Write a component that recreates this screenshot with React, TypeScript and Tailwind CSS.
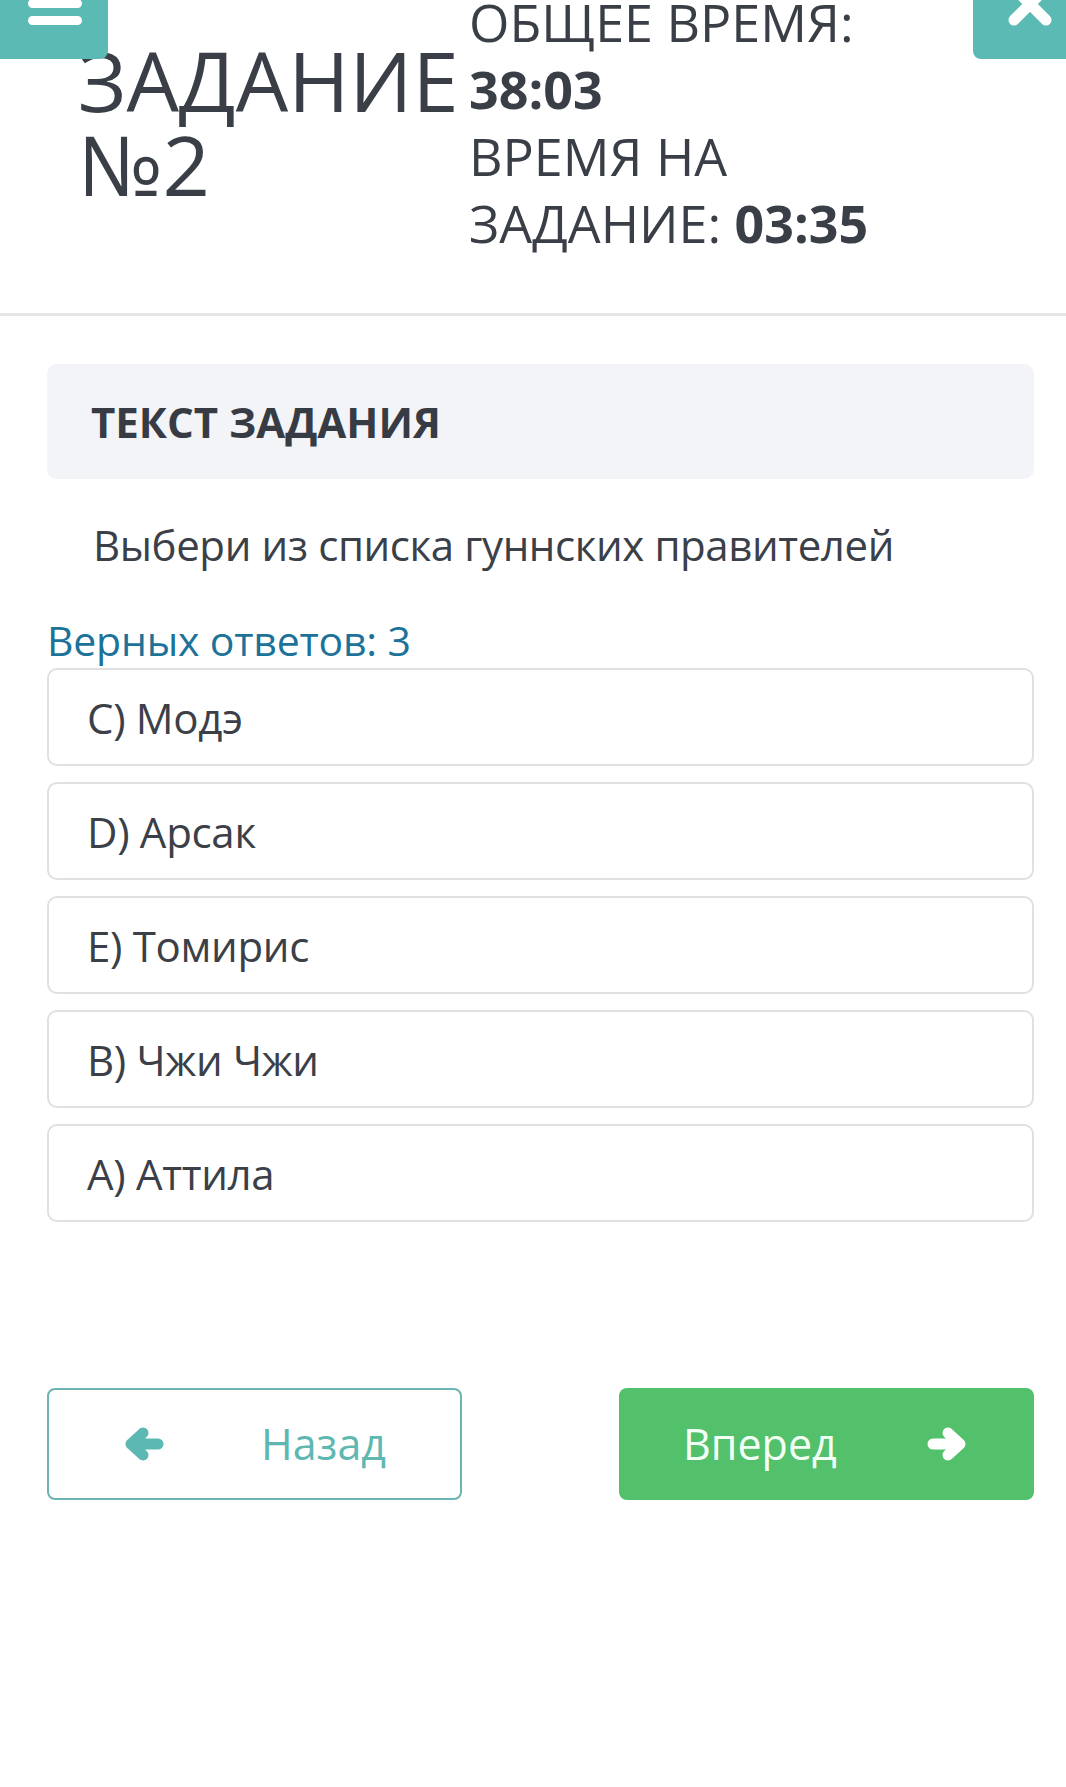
import React from "react";

const options = ["C) Модэ", "D) Арсак", "E) Томирис", "B) Чжи Чжи", "A) Аттила"];

function MenuButton() {
  return (
    <button className="absolute left-0 top-0 h-[59px] w-[108px] overflow-hidden rounded-br-[8px] bg-[#5bbab4]">
      <svg
        className="absolute left-[28px] top-[-18px]"
        width="54"
        height="43"
        viewBox="0 0 54 43"
      >
        <rect x="0" y="0" width="54" height="9" rx="4.5" fill="#fff" />
        <rect x="0" y="17" width="54" height="9" rx="4.5" fill="#fff" />
        <rect x="0" y="34" width="54" height="9" rx="4.5" fill="#fff" />
      </svg>
    </button>
  );
}

function CloseButton() {
  return (
    <button className="absolute right-0 top-0 h-[59px] w-[93px] overflow-hidden rounded-bl-[8px] bg-[#5bbab4]">
      <svg
        className="absolute left-[33px] top-[-20px]"
        width="48"
        height="48"
        viewBox="0 0 48 48"
      >
        <path
          d="M8 8 L40 40 M40 8 L8 40"
          stroke="#fff"
          strokeWidth="11"
          strokeLinecap="round"
        />
      </svg>
    </button>
  );
}

// chunky arrow like the font-awesome one in the screenshot
function Arrow({ dir, color }: { dir: "left" | "right"; color: string }) {
  return (
    <svg
      width="40"
      height="34"
      viewBox="0 0 40 34"
      className={dir === "right" ? "-scale-x-100" : ""}
    >
      <path
        d="M7 17 L34 17 M19 6 L7 17 L19 28"
        stroke={color}
        strokeWidth="11"
        strokeLinecap="round"
        strokeLinejoin="round"
        fill="none"
      />
      <path d="M7 17 L19 6 L19 28 Z" fill={color} />
    </svg>
  );
}

export default function App() {
  return (
    <div
      className="relative min-h-[1787px] overflow-hidden bg-white text-[#3b4048]"
      style={{ fontFamily: '"Open Sans", "Noto Sans", sans-serif' }}
    >
      <header className="-mt-[12px] flex items-center border-b-[3px] border-[#e6e6e6] pb-[57px] pl-[78px]">
        <h1 className="w-[391px] shrink-0 text-[83px] font-normal leading-[84px] text-[#3a3f47]">
          ЗАДАНИЕ
          <br />
          №2
        </h1>
        <div className="text-[52px] leading-[67px] text-[#3a3f47]">
          <div>ОБЩЕЕ ВРЕМЯ:</div>
          <div className="font-bold">38:03</div>
          <div>ВРЕМЯ НА</div>
          <div>
            ЗАДАНИЕ: <span className="font-bold">03:35</span>
          </div>
        </div>
      </header>

      <main className="pl-[47px] pr-[32px] pt-[48px]">
        <div className="flex h-[115px] items-center rounded-[10px] bg-[#f3f4f7] pl-[44px]">
          <h2 className="text-[42px] font-bold leading-none text-[#373c44]">ТЕКСТ ЗАДАНИЯ</h2>
        </div>

        <p className="mt-[36px] pl-[46px] text-[42px] leading-[60px] tracking-[-0.4px] text-[#3b4048]">
          Выбери из списка гуннских правителей
        </p>

        <div className="mt-[37px] text-[41px] leading-[56px] tracking-[-0.2px] text-[#1d7299]">
          Верных ответов: 3
        </div>

        <ul className="flex flex-col gap-[16px]">
          {options.map((option) => (
            <li
              key={option}
              className="flex h-[98px] items-center rounded-[10px] border-2 border-[#e0e0e0] pl-[38px] text-[42px] tracking-[-0.3px] text-[#3b4048]"
            >
              {option}
            </li>
          ))}
        </ul>

        <div className="mt-[166px] flex justify-between">
          <button className="flex h-[112px] w-[415px] items-center justify-between rounded-[8px] border-2 border-[#6db3b4] pl-[75px] pr-[74px] text-[43px] text-[#5fb7b1]">
            <Arrow dir="left" color="#5cb8b2" />
            <span>Назад</span>
          </button>
          <button className="flex h-[112px] w-[415px] items-center justify-between rounded-[8px] bg-[#53c06b] pl-[64px] pr-[67px] text-[43px] text-[#f2fff5]">
            <span>Вперед</span>
            <Arrow dir="right" color="#ffffff" />
          </button>
        </div>
      </main>

      <MenuButton />
      <CloseButton />
    </div>
  );
}
